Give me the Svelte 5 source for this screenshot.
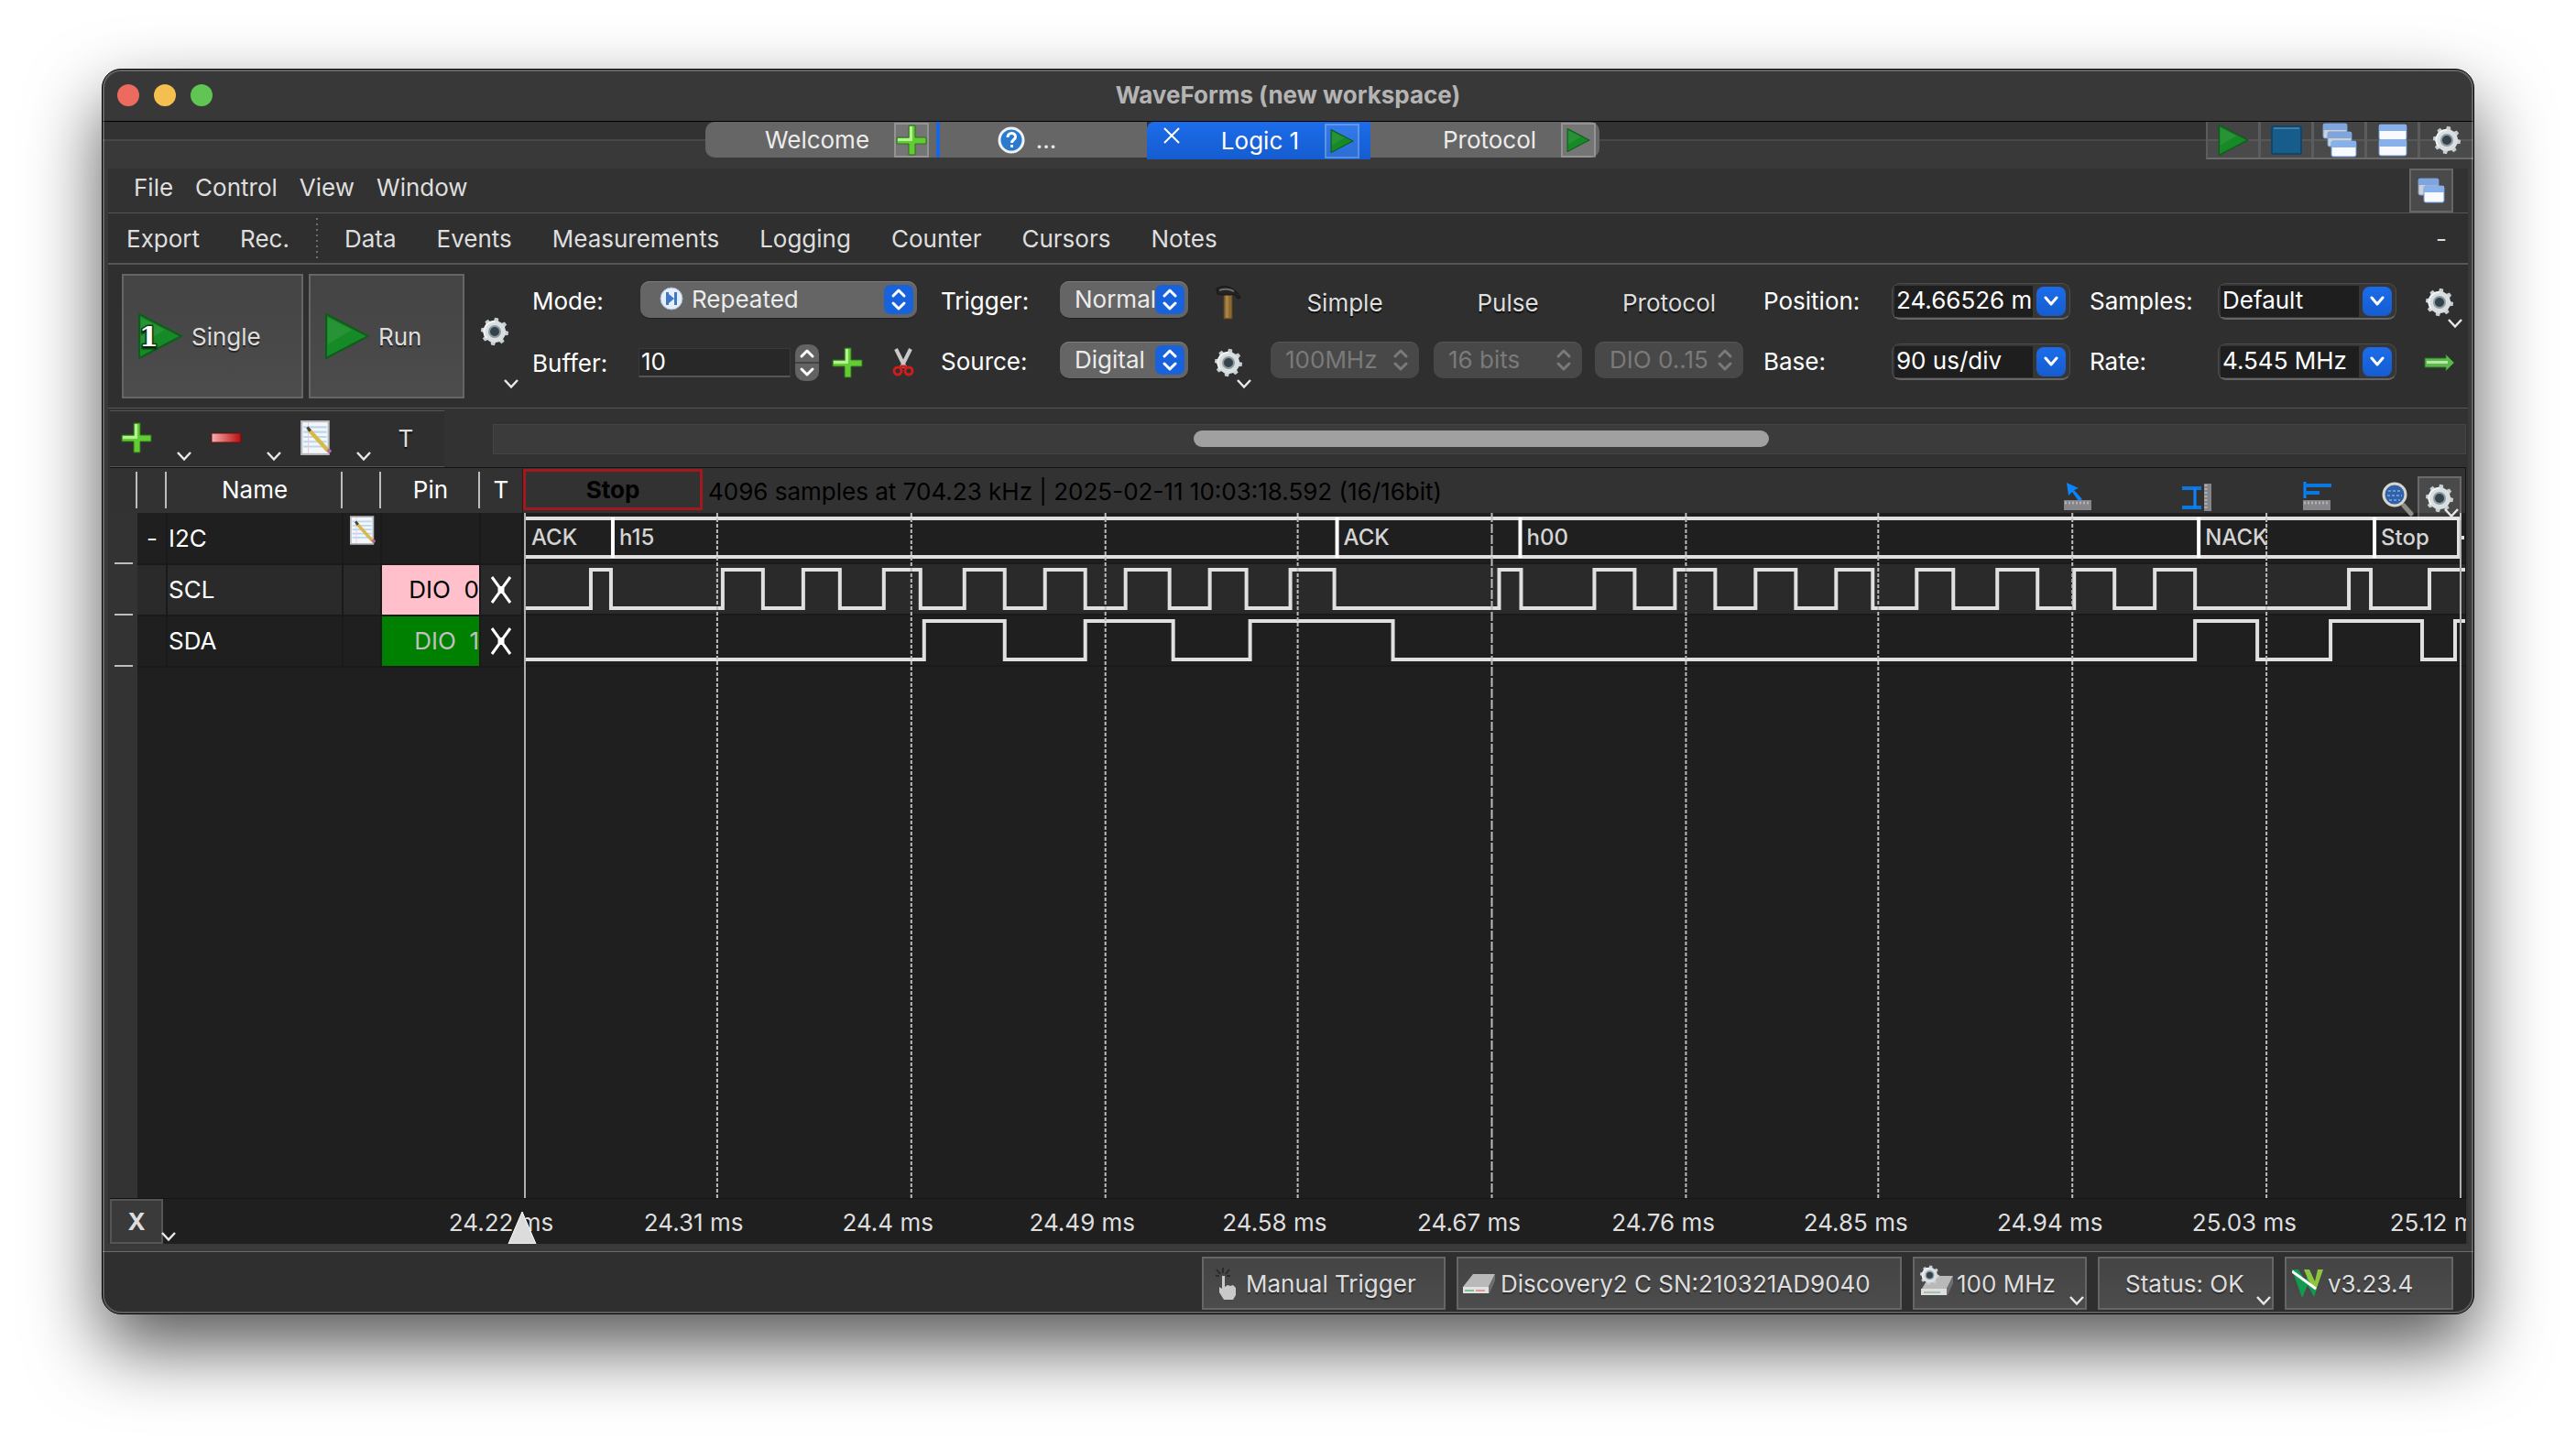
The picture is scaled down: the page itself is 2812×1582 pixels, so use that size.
<script>
  const menus = ['File', 'Control', 'View', 'Window'];
  const exportTools = ['Export', 'Rec.'];
  const viewTools = ['Data', 'Events', 'Measurements', 'Logging', 'Counter', 'Cursors', 'Notes'];

  const plotWidth = 2121;
  const plotHeight = 748;
  const gridLines = [2, 212, 424, 636, 846, 1058, 1270, 1480, 1692, 1904, 2116];
  const ticks = [
    '24.22 ms', '24.31 ms', '24.4 ms', '24.49 ms', '24.58 ms', '24.67 ms',
    '24.76 ms', '24.85 ms', '24.94 ms', '25.03 ms', '25.12 ms'
  ];
  const frames = [
    { at: 2, text: 'ACK' },
    { at: 98, text: 'h15' },
    { at: 889, text: 'ACK' },
    { at: 1089, text: 'h00' },
    { at: 1830, text: 'NACK' },
    { at: 2022, text: 'Stop' }
  ];
  const sclEdges = [
    74, 96, 218, 262, 306, 346, 394, 434, 482, 526, 570, 614, 658, 706, 750, 790, 838, 886,
    1066, 1090, 1170, 1214, 1258, 1302, 1346, 1390, 1434, 1474, 1522, 1562, 1610, 1654, 1694,
    1738, 1782, 1826, 1994, 2018, 2082
  ];
  const sdaEdges = [438, 526, 614, 710, 794, 950, 1826, 1894, 1974, 2074, 2110];

  function trace(edges, high, low) {
    let level = low;
    let d = `M2 ${low}`;
    for (const x of edges) {
      level = level === low ? high : low;
      d += `H${x}V${level}`;
    }
    return d + `H${plotWidth}`;
  }
  const pct = (x) => (x / plotWidth) * 100 + '%';
  const teeth = [0, 45, 90, 135, 180, 225, 270, 315];
</script>

{#snippet gearShape()}
  {#each teeth as a}
    <path d="M14 7 L15 2 H19 L20 7Z" transform="rotate({a + 8} 17 17)" fill="#c6ced2" />
  {/each}
  <circle cx="17" cy="17" r="9" fill="none" stroke="#d9dee1" stroke-width="6" />
  <path d="M8 24 A11 11 0 0 1 17 6" fill="none" stroke="#f2f4f5" stroke-width="2" />
  <circle cx="17" cy="17" r="6" fill="#33424b" stroke="#8c999f" stroke-width="2" />
{/snippet}

{#snippet gear()}
  <svg class="ico" width="34" height="34" viewBox="0 0 34 34" aria-hidden="true">{@render gearShape()}</svg>
{/snippet}

{#snippet play(size)}
  <svg class="ico" width={size} height={size} viewBox="0 0 50 50" aria-hidden="true">
    <path d="M2 1 L48 25 L2 49Z" fill="#168a26" stroke="#0e5c1b" stroke-width="2" />
    <path d="M4 5 L30 18 L4 34Z" fill="#3a9a45" opacity=".5" />
  </svg>
{/snippet}

{#snippet plus()}
  <svg class="ico" width="34" height="34" viewBox="0 0 34 34" aria-hidden="true">
    <path d="M14 1h7v13h12v7H21v12h-7V21H1v-7h13z" fill="#62cc35" stroke="#2f6f1a" stroke-width="1" />
    <path d="M15 2h3v13H15zM2 15h16v3H2z" fill="#b6f095" />
  </svg>
{/snippet}

{#snippet chevron()}
  <svg class="ico chev" width="18" height="12" viewBox="0 0 18 12" aria-hidden="true">
    <path d="M2 2 L9 9.500 L16 2" fill="none" stroke="#e8e8e8" stroke-width="2.500" />
  </svg>
{/snippet}

{#snippet updown()}
  <svg class="arrows" width="32" height="32" viewBox="0 0 32 32" aria-hidden="true">
    <rect class="pad" width="32" height="32" rx="7" />
    <path d="M10 12 L16 6 L22 12 M10 20 L16 26 L22 20" fill="none" stroke-width="3" stroke-linecap="round" stroke-linejoin="round" />
  </svg>
{/snippet}

{#snippet notepad(w, h)}
  <svg class="ico" width={w} height={h} viewBox="0 0 32 36" aria-hidden="true">
    <rect x="1" y="1" width="28" height="34" fill="#f4f7fa" stroke="#b5b9bd" stroke-width="2" />
    <path d="M3 7h24M3 12h24M3 17h24M3 22h24M3 27h24" stroke="#bcd6f0" stroke-width="2" />
    <path d="M8 2v32" stroke="#f0c8dc" stroke-width="1" />
    <path d="M8 9 L28 31" stroke="#d8b848" stroke-width="4" />
    <path d="M7 7 L10 11" stroke="#444" stroke-width="3" />
    <path d="M28 30 L31 33" stroke="#b06a9a" stroke-width="4" />
  </svg>
{/snippet}

{#snippet pane(x, y, w, h, faded)}
  <rect {x} {y} width={w} height={h} rx="2" fill={faded ? '#cdd1d6' : '#f8fafd'} stroke="#6f98d4" stroke-width="1" />
  <rect {x} {y} width={w} height="7" fill={faded ? '#7fa5dc' : '#86b1ea'} />
{/snippet}

{#snippet cross()}
  <svg width="28" height="32" viewBox="0 0 28 32" aria-hidden="true">
    <path d="M3 2 L11 13 V19 L3 30 M23 2 L15 13 V19 L23 30 M13 12 V20" fill="none" stroke="#fff" stroke-width="3" />
  </svg>
{/snippet}

{#snippet combo(id, value)}
  <div class="combo">
    <input {id} type="text" {value} />
    <button type="button" aria-label="Show choices">
      <svg width="16" height="12" viewBox="0 0 16 12" aria-hidden="true">
        <path d="M2 2 L8 9 L14 2" fill="none" stroke="#fff" stroke-width="3" stroke-linecap="round" stroke-linejoin="round" />
      </svg>
    </button>
  </div>
{/snippet}

<div class="page">
  <main class="window">
    <header class="titlebar">
      <div class="lights">
        <button type="button" class="light red" aria-label="Close"></button>
        <button type="button" class="light yellow" aria-label="Minimize"></button>
        <button type="button" class="light green" aria-label="Zoom"></button>
      </div>
      <h1>WaveForms (new workspace)</h1>
    </header>

    <div class="tabstrip">
      <div class="tabs">
        <div class="tab first">
          <button type="button" class="name">Welcome</button>
          <button type="button" class="mini" aria-label="Add">{@render plus()}</button>
        </div>
        <div class="tab help">
          <button type="button" class="name">
            <svg class="ico" width="30" height="30" viewBox="0 0 30 30" aria-hidden="true">
              <circle cx="15" cy="15" r="13" fill="#2a7bd0" stroke="#f0f2f4" stroke-width="3" />
              <path d="M11 12 C11 6 19.500 6 19.500 11.500 C19.500 14.500 15.500 14.500 15.500 18" fill="none" stroke="#fff" stroke-width="3" />
              <rect x="14" y="20" width="3" height="3" fill="#fff" />
            </svg>
            <span>...</span>
          </button>
        </div>
        <div class="tab active">
          <button type="button" class="shut" aria-label="Close tab">
            <svg width="20" height="20" viewBox="0 0 20 20" aria-hidden="true"><path d="M2 2 L18 18 M18 2 L2 18" stroke="#fff" stroke-width="2" /></svg>
          </button>
          <button type="button" class="name">Logic 1</button>
          <button type="button" class="mini" aria-label="Run Logic 1">{@render play(26)}</button>
        </div>
        <div class="tab last">
          <button type="button" class="name">Protocol</button>
          <button type="button" class="mini" aria-label="Run Protocol">{@render play(26)}</button>
        </div>
      </div>
      <div class="window-tools">
        <button type="button" aria-label="Run all">{@render play(34)}</button>
        <button type="button" aria-label="Stop all">
          <svg width="34" height="32" viewBox="0 0 34 32" aria-hidden="true"><rect x="1" y="1" width="32" height="30" rx="1" fill="#175d8c" stroke="#124567" stroke-width="2" /><path d="M3 3h28" stroke="#3a80ad" stroke-width="2" /></svg>
        </button>
        <button type="button" aria-label="Cascade windows">
          <svg width="38" height="38" viewBox="0 0 38 38" aria-hidden="true">{@render pane(1, 1, 26, 16, true)}{@render pane(6, 10, 26, 16, true)}{@render pane(10, 20, 27, 17, false)}</svg>
        </button>
        <button type="button" aria-label="Tile windows">
          <svg width="32" height="36" viewBox="0 0 32 36" aria-hidden="true">{@render pane(1, 1, 30, 17, false)}{@render pane(1, 18, 30, 17, false)}</svg>
        </button>
        <button type="button" aria-label="Settings">{@render gear()}</button>
      </div>
    </div>

    <div class="panel">
      <nav class="menubar">
        {#each menus as m}<button type="button">{m}</button>{/each}
        <button type="button" class="undock" aria-label="Undock">
          <svg width="30" height="28" viewBox="0 0 30 28" aria-hidden="true">{@render pane(1, 1, 22, 18, true)}{@render pane(7, 9, 22, 18, false)}</svg>
        </button>
      </nav>

      <nav class="toolbar">
        {#each exportTools as t}<button type="button">{t}</button>{/each}
        <span class="dots"></span>
        {#each viewTools as t}<button type="button">{t}</button>{/each}
        <button type="button" class="collapse">-</button>
      </nav>

      <section class="controls">
        <button type="button" class="big single">
          <svg width="50" height="52" viewBox="0 0 50 52" aria-hidden="true">
            <path d="M2 2 L48 26 L2 50Z" fill="#168a26" stroke="#0e5c1b" stroke-width="2" />
            <path d="M4 6 L30 19 L4 35Z" fill="#3a9a45" opacity=".5" />
            <text x="2" y="37" class="one">1</text>
          </svg>
          <span>Single</span>
        </button>
        <button type="button" class="big run">{@render play(50)}<span>Run</span></button>
        <button type="button" class="plain acquire" aria-label="Acquisition options">{@render gear()}{@render chevron()}</button>

        <div class="fields">
          <label for="mode">Mode:</label>
          <div class="select wide">
            <select id="mode"><option>Repeated</option></select>
            <svg class="lead" width="28" height="28" viewBox="0 0 28 28" aria-hidden="true">
              <circle cx="14" cy="14" r="12" fill="#e6eef9" stroke="#9fb2cc" stroke-width="1" />
              <path d="M8 7h3v14H8zM17 7h3v14h-3zM11 9l6 5-6 5z" fill="#3f78c4" />
            </svg>
            {@render updown()}
          </div>
          <label for="trigger">Trigger:</label>
          <div class="select"><select id="trigger"><option>Normal</option></select>{@render updown()}</div>
          <button type="button" class="plain" aria-label="Force trigger">
            <svg width="28" height="38" viewBox="0 0 28 38" aria-hidden="true">
              <rect x="9" y="9" width="9" height="28" fill="#8d6a35" stroke="#5a401b" stroke-width="1" />
              <rect x="11" y="10" width="3" height="26" fill="#a78345" />
              <path d="M1 4 C8 0 20 0 27 14 L24 15 C21 10 19 10 17 11 L8 11 L2 10Z" fill="#232323" stroke="#141414" stroke-width="1" />
              <path d="M4 6 C10 4 14 4 20 7" stroke="#6c6c6c" stroke-width="2" fill="none" />
            </svg>
          </button>
          <button type="button" class="caption">Simple</button>
          <button type="button" class="caption">Pulse</button>
          <button type="button" class="caption">Protocol</button>
          <label for="position">Position:</label>
          {@render combo('position', '24.66526 ms')}
          <label for="samples">Samples:</label>
          {@render combo('samples', 'Default')}
          <button type="button" class="plain drop" aria-label="Sampling options">{@render gear()}{@render chevron()}</button>

          <label for="buffer" class="low">Buffer:</label>
          <div class="buffer">
            <input id="buffer" type="text" value="10" />
            <svg class="spin" width="26" height="40" viewBox="0 0 26 40" aria-hidden="true">
              <rect width="26" height="40" rx="10" fill="#636363" />
              <path d="M0 20h26" stroke="#444" stroke-width="2" />
              <path d="M7 13 L13 7 L19 13 M7 27 L13 33 L19 27" fill="none" stroke="#fff" stroke-width="3" stroke-linecap="round" stroke-linejoin="round" />
            </svg>
            <button type="button" class="plain" aria-label="Add buffer">{@render plus()}</button>
            <button type="button" class="plain cut" aria-label="Clear buffers">
              <svg width="24" height="32" viewBox="0 0 24 32" aria-hidden="true">
                <path d="M4 1 L14 21 M20 1 L10 21" stroke="#c9c9c9" stroke-width="4" />
                <circle cx="6" cy="25" r="4" fill="none" stroke="#d01c1c" stroke-width="3" />
                <circle cx="18" cy="25" r="4" fill="none" stroke="#d01c1c" stroke-width="3" />
                <path d="M9 20h6" stroke="#d01c1c" stroke-width="3" />
              </svg>
            </button>
          </div>
          <label for="source">Source:</label>
          <div class="select"><select id="source"><option>Digital</option></select>{@render updown()}</div>
          <button type="button" class="plain drop" aria-label="Trigger options">{@render gear()}{@render chevron()}</button>
          <div class="select off"><select aria-label="Simple" disabled><option>100MHz</option></select>{@render updown()}</div>
          <div class="select off"><select aria-label="Pulse" disabled><option>16 bits</option></select>{@render updown()}</div>
          <div class="select off"><select aria-label="Protocol" disabled><option>DIO 0..15</option></select>{@render updown()}</div>
          <label for="base">Base:</label>
          {@render combo('base', '90 us/div')}
          <label for="rate">Rate:</label>
          {@render combo('rate', '4.545 MHz')}
          <button type="button" class="plain" aria-label="Apply rate">
            <svg width="34" height="20" viewBox="0 0 34 20" aria-hidden="true"><path d="M1 5H24V1L33 10L24 19V15H1Z" fill="#5cb84c" stroke="#2c6a22" stroke-width="1" /><path d="M3 8h23v3H3z" fill="#b5e6a4" /></svg>
          </button>
        </div>
      </section>

      <div class="channelbar">
        <div class="channel-tools">
          <button type="button" class="plain drop" aria-label="Add channel">{@render plus()}{@render chevron()}</button>
          <button type="button" class="plain drop" aria-label="Remove channel">
            <svg class="ico" width="34" height="34" viewBox="0 0 34 34" aria-hidden="true">
              <defs><linearGradient id="minus" x2="1" y2="0"><stop offset="0" stop-color="#f7b0b0" /><stop offset="1" stop-color="#b80d0d" /></linearGradient></defs>
              <rect x="1" y="12" width="32" height="10" fill="url(#minus)" stroke="#6d1010" stroke-width="1" />
            </svg>
            {@render chevron()}
          </button>
          <button type="button" class="plain drop" aria-label="Edit channel">{@render notepad(34, 38)}{@render chevron()}</button>
          <button type="button" class="plain tee">T</button>
        </div>
        <div class="track"><div class="thumb"></div></div>
      </div>

      <div class="scope">
        <table>
          <thead>
            <tr><th class="c0"></th><th class="c1"></th><th class="c2">Name</th><th class="c3"></th><th class="c4">Pin</th><th class="c5">T</th></tr>
          </thead>
          <tbody>
            <tr><td class="gutter"></td><td class="mid">-</td><td>I2C</td><td class="note">{@render notepad(28, 32)}</td><td></td><td></td></tr>
            <tr class="alt"><td class="gutter"></td><td></td><td>SCL</td><td></td><td class="pin pink">DIO  0</td><td class="mid">{@render cross()}</td></tr>
            <tr><td class="gutter"></td><td></td><td>SDA</td><td></td><td class="pin leaf">DIO  1</td><td class="mid">{@render cross()}</td></tr>
            <tr class="rest"><td class="gutter"></td><td colspan="5"></td></tr>
          </tbody>
        </table>

        <div class="plot">
          <div class="plot-head">
            <strong class="state">Stop</strong>
            <span class="info">4096 samples at 704.23 kHz | 2025-02-11 10:03:18.592 (16/16bit)</span>
            <div class="plot-tools">
              <button type="button" class="plain" aria-label="Cursor measure">
                <svg width="30" height="32" viewBox="0 0 30 32" aria-hidden="true"><path d="M3 1 L16 7 L11 9 L20 19 L16 21 L9 11 L5 15Z" fill="#0a84ff" /><rect y="20" width="30" height="11" fill="#85858a" /><path d="M1 23h28" stroke="#b0b0b4" stroke-width="3" stroke-dasharray="2 2" /></svg>
              </button>
              <button type="button" class="plain" aria-label="Vertical measure">
                <svg width="34" height="32" viewBox="0 0 34 32" aria-hidden="true"><path d="M1 7h21M1 28h21" stroke="#0a78e0" stroke-width="4" /><path d="M15 7v21" stroke="#0a84ff" stroke-width="3" /><rect x="25" y="2" width="8" height="30" fill="#85858a" /><path d="M27 3v28" stroke="#b0b0b4" stroke-width="3" stroke-dasharray="2 2" /></svg>
              </button>
              <button type="button" class="plain" aria-label="Horizontal measure">
                <svg width="32" height="32" viewBox="0 0 32 32" aria-hidden="true"><path d="M3 0v18" stroke="#0a84ff" stroke-width="3" /><path d="M3 4h29M3 12h16" stroke="#0a78e0" stroke-width="4" /><rect x="1" y="20" width="30" height="11" fill="#85858a" /><path d="M2 23h28" stroke="#b0b0b4" stroke-width="3" stroke-dasharray="2 2" /></svg>
              </button>
              <button type="button" class="plain" aria-label="Zoom">
                <svg width="36" height="38" viewBox="0 0 36 38" aria-hidden="true"><path d="M25 26 L33 35" stroke="#8e8e84" stroke-width="5" stroke-linecap="round" /><circle cx="15" cy="14" r="12" fill="#2f62a8" stroke="#d6d6cc" stroke-width="3" /><path d="M8 10h14M7 15h16M9 20h12" stroke="#6d97d2" stroke-width="2" stroke-dasharray="3 2" /></svg>
              </button>
              <button type="button" class="options" aria-label="Plot options">{@render gear()}{@render chevron()}</button>
            </div>
          </div>
          <div class="canvas">
            <svg class="wave" viewBox="0 0 {plotWidth} {plotHeight}" preserveAspectRatio="none" aria-label="Logic waveforms">
              <rect width={plotWidth} height={plotHeight} fill="#1f1f1f" />
              <rect y="56" width={plotWidth} height="54" fill="#2a2a2a" />
              <path d="M0 55H{plotWidth}M0 111H{plotWidth}M0 167H{plotWidth}" stroke="#1a1a1a" stroke-width="2" />
              <g fill="none" stroke="#e0e0e0" stroke-width="4">
                <path d="M2 6H2116M2 48H2116" />
                {#each frames.slice(1) as f}<path d="M{f.at} 5V49" stroke="#fff" />{/each}
                <path d="M2114 5V49M2114 27H2120" />
                <path d={trace(sclEdges, 62, 104)} />
                <path d={trace(sdaEdges, 118, 160)} />
              </g>
              {#each gridLines as x, i}
                <path
                  d="M{x} 0V{plotHeight}"
                  stroke={i === 0 || i === 10 ? '#b0b0b0' : '#bcbcbc'}
                  stroke-width="2"
                  stroke-dasharray={i === 0 || i === 10 ? 'none' : i === 5 ? '10 2' : '4 2'}
                />
              {/each}
            </svg>
            {#each frames as f}<span class="frame" style:left={pct(f.at + 7)}>{f.text}</span>{/each}
          </div>
        </div>
      </div>

      <div class="axis">
        <button type="button" class="axis-x">X</button>
        {@render chevron()}
        <div class="ticks">
          {#each ticks as t, i}<span style:left={pct(gridLines[i] - 25)}>{t}</span>{/each}
          <svg class="marker" width="32" height="36" viewBox="0 0 32 36" aria-hidden="true"><path d="M16 1 L31 36 H1Z" fill="#dcdcdc" stroke="#fff" stroke-width="1" /></svg>
        </div>
      </div>
    </div>

    <footer class="status">
      <button type="button" class="st manual">
        <svg width="26" height="38" viewBox="0 0 26 38" aria-hidden="true"><path d="M9 1v6M2 3l4 5M16 3l-4 5M1 10h4M13 10h4" stroke="#2b2b2b" stroke-width="2" /><path d="M8 10h3v12l3-2 3 1 3-1 3 3v8l-3 5H10l-5-8v-6l3 2z" fill="#c9c9c9" /></svg>
        <span>Manual Trigger</span>
      </button>
      <button type="button" class="st device">
        <svg width="38" height="24" viewBox="0 0 38 24" aria-hidden="true"><path d="M12 1H36L29 15H1Z" fill="#b9b9b9" /><path d="M1 15H29V22H1Z" fill="#e3e3e3" /><path d="M29 15L36 1V8L30 22H29Z" fill="#6f6f6f" /><path d="M3 19h10" stroke="#7ac290" stroke-width="2" /><path d="M15 19h10" stroke="#dc9c9c" stroke-width="2" /></svg>
        <span>Discovery2 C SN:210321AD9040</span>
      </button>
      <button type="button" class="st clock">
        <svg width="38" height="42" viewBox="0 0 38 42" aria-hidden="true"><path d="M10 12H36L29 26H2Z" fill="#b9b9b9" /><path d="M1 26H29V33H1Z" fill="#dedede" /><path d="M29 26L36 12V20L30 33H29Z" fill="#6f6f6f" /><path d="M4 30h18" stroke="#a4c2ac" stroke-width="2" /><g transform="scale(.7) translate(-2 -1)">{@render gearShape()}</g></svg>
        <span>100 MHz</span>{@render chevron()}
      </button>
      <button type="button" class="st state-ok"><span>Status: OK</span>{@render chevron()}</button>
      <button type="button" class="st version">
        <svg width="34" height="34" viewBox="0 0 34 34" aria-hidden="true"><path d="M0 1 H7 L14 13 L18 8 L27 22 L24 31 L17 18 L11 32Z" fill="#129a50" /><path d="M13 1 H19 L25 14 L28 1 H34 L26 24 L18 13Z" fill="#8cc63f" /><path d="M0 3 L26 22" stroke="#fff" stroke-width="3" /></svg>
        <span>v3.23.4</span>
      </button>
    </footer>
  </main>
</div>

<style>
  :global(body) {
    margin: 0;
    background: #fff;
  }
  .page {
    padding: 75px 111px 148px;
    overflow: hidden;
    font: 26px/32px Inter, 'Liberation Sans', sans-serif;
    color: #fff;
  }
  .page, .page :global(*) {
    box-sizing: border-box;
  }
  button, input, select {
    font: inherit;
    color: inherit;
    margin: 0;
    padding: 0;
    border: 0;
    background: none;
    white-space: nowrap;
  }
  button, .titlebar, .tab {
    display: flex;
    align-items: center;
  }
  svg {
    display: block;
    flex: none;
  }
  .window {
    position: relative;
    border: 1px solid #000;
    border-radius: 21px;
    background: #393939;
    overflow: hidden;
    box-shadow: 0 36px 80px rgba(0, 0, 0, 0.66);
  }
  .window::after {
    content: '';
    position: absolute;
    inset: 0;
    border: 2px solid rgba(255, 255, 255, 0.22);
    border-radius: 20px;
    pointer-events: none;
  }

  .titlebar {
    height: 57px;
    border-bottom: 1px solid #000;
    background: #383838;
    display: grid;
    grid-template-columns: 1fr auto 1fr;
  }
  .lights {
    display: flex;
    gap: 16px;
    padding-left: 16px;
  }
  .light {
    width: 24px;
    height: 24px;
    border-radius: 50%;
  }
  .red { background: #ed6a5e; }
  .yellow { background: #f5bf4f; }
  .green { background: #61c554; }
  h1 {
    margin: 0;
    font-size: 26px;
    line-height: 32px;
    font-weight: 700;
    color: #b4b4b4;
  }

  .tabstrip {
    height: 51px;
    display: flex;
    align-items: flex-start;
    background: linear-gradient(#323232 19px, #484848 19px, #484848 21px, #393939 21px);
  }
  .tabs {
    flex: 1;
    display: flex;
    justify-content: center;
    padding-right: 4px;
  }
  .tab {
    height: 39px;
    background: #666;
    color: #ececec;
    justify-content: flex-end;
  }
  .tab .name {
    height: 100%;
    flex: 1;
    justify-content: center;
  }
  .first {
    width: 252px;
    border-radius: 10px 0 0 10px;
    padding: 0 8px 0 38px;
  }
  .help {
    width: 230px;
    border-left: 4px solid #1a66e0;
    padding-right: 36px;
  }
  .help .name { gap: 12px; }
  .active {
    width: 244px;
    height: 41px;
    background: linear-gradient(#1c6cea, #155cd0);
    color: #fff;
    padding: 0 12px 0 17px;
    border-radius: 8px 0 0 0;
  }
  .active .name { padding-left: 16px; }
  .last {
    width: 250px;
    border-radius: 0 10px 10px 0;
    padding: 0 4px 0 52px;
  }
  .shut {
    height: 30px;
    align-self: flex-start;
  }
  .mini {
    width: 38px;
    height: 38px;
    justify-content: center;
    border: 2px solid rgba(255, 255, 255, 0.22);
    background: rgba(255, 255, 255, 0.1);
  }
  .window-tools {
    display: flex;
    height: 41px;
    border-left: 2px solid #5c5c5c;
    border-bottom: 2px solid #6a6a6a;
  }
  .window-tools button {
    width: 58px;
    justify-content: center;
    border-right: 3px solid #5c5c5c;
    background: rgba(255, 255, 255, 0.09);
  }
  .window-tools button:last-child { border-right: 0; }

  .panel {
    margin: 0 6px 8px;
    background: #323232;
  }
  .menubar {
    height: 49px;
    display: flex;
    align-items: center;
    gap: 24px;
    padding: 0 16px 0 28px;
    border-bottom: 1px solid #555;
    color: #dedede;
  }
  .menubar button { height: 48px; padding-bottom: 7px; }
  .menubar .undock {
    margin-left: auto;
    width: 48px;
    height: 48px;
    padding: 0;
    justify-content: center;
    border: 2px solid #666;
    background: #4a4a4a;
  }
  .toolbar {
    height: 56px;
    display: flex;
    align-items: center;
    gap: 44px;
    padding: 2px 23px 0 20px;
    border-bottom: 2px solid #555;
    background: #2f2f2f;
    color: #dedede;
    text-shadow: 0 2px 1px rgba(0, 0, 0, 0.7);
  }
  .dots {
    width: 2px;
    height: 46px;
    margin: 0 -15px;
    background: repeating-linear-gradient(#6e6e6e 0 2px, transparent 2px 6px);
  }
  .collapse { margin-left: auto; }

  .controls {
    height: 157px;
    display: flex;
    gap: 6px;
    padding: 10px 0 10px 15px;
    border-bottom: 1px solid #555;
    background: #2f2f2f;
  }
  .big {
    height: 136px;
    flex: none;
    padding: 0 0 0 15px;
    gap: 9px;
    border: 2px solid #666;
    background: linear-gradient(#444, #4c4c4c);
    color: #dedede;
    text-shadow: 0 2px 1px rgba(0, 0, 0, 0.5);
  }
  .big span { padding-top: 2px; }
  .single { width: 198px; }
  .run { width: 170px; }
  .one {
    font: bold 30px 'DejaVu Serif', serif;
    fill: #fff;
    stroke: #143a18;
    stroke-width: 3px;
    paint-order: stroke;
  }
  .plain {
    position: relative;
    justify-content: center;
  }
  .acquire {
    width: 54px;
    height: 126px;
    flex: none;
  }
  .chev {
    position: absolute;
    right: 0;
    bottom: 0;
  }
  .fields {
    display: grid;
    grid-template-columns: 118px 328px 130px 140px 90px 178px 176px 184px 140px 216px 140px 198px 72px;
    grid-template-rows: 42px 42px;
    row-gap: 24px;
    padding-top: 8px;
    margin-left: 8px;
  }
  .fields > label { padding-top: 6px; }
  .fields > .low { padding-top: 8px; }
  .fields > .plain {
    width: 52px;
    height: 46px;
    margin-left: 18px;
    justify-content: center;
  }
  .fields > .drop .chev { bottom: -6px; }
  .caption {
    width: 162px;
    height: 48px;
    justify-content: center;
    color: #dedede;
    text-shadow: 0 2px 1px rgba(0, 0, 0, 0.7);
  }
  .select {
    position: relative;
    width: 140px;
    height: 40px;
  }
  .wide { width: 302px; }
  .off { width: 162px; }
  select {
    appearance: none;
    width: 100%;
    height: 100%;
    padding: 0 34px 0 16px;
    border-radius: 10px;
    background: #656565;
    color: #ececec;
    box-shadow: inset 0 1px 0 #7c7c7c, 0 1px 1px #222;
    opacity: 1;
  }
  .wide select { padding-left: 56px; }
  .off select {
    background: #484848;
    color: #7a7a7a;
    box-shadow: inset 0 1px 0 #555;
  }
  .lead, .arrows {
    position: absolute;
    pointer-events: none;
  }
  .lead { left: 20px; top: 5px; }
  .arrows {
    right: 4px;
    top: 4px;
    stroke: #fff;
  }
  .pad { fill: #1862dc; stroke: none; }
  .off .arrows { stroke: #7a7a7a; }
  .off .pad { fill: none; }
  .combo {
    width: 195px;
    height: 40px;
    margin-top: 2px;
    display: flex;
    align-items: center;
    gap: 4px;
    padding: 0 4px 0 2px;
    border: 1px solid #4c4c4c;
    border-bottom: 2px solid #666;
    border-radius: 9px;
    background: #363636;
  }
  .combo input {
    flex: 1;
    min-width: 0;
    height: 34px;
    padding: 0 0 3px 2px;
    background: #1e1e1e;
  }
  .combo button {
    width: 32px;
    height: 32px;
    justify-content: center;
    border-radius: 8px;
    background: linear-gradient(#1c6cea, #155cd0);
  }
  .buffer {
    display: flex;
    align-items: center;
    height: 40px;
    margin-top: 3px;
  }
  .buffer input {
    width: 166px;
    height: 32px;
    margin-left: -2px;
    padding: 0 2px 1px;
    background: #282828;
    border: 1px solid #3a3a3a;
    border-bottom: 2px solid #555;
  }
  .spin { margin: 0 14px 0 5px; }
  .cut { margin-left: 32px; }

  .channelbar {
    height: 64px;
    display: flex;
    align-items: center;
    gap: 53px;
    padding: 0 2px;
  }
  .channel-tools {
    width: 365px;
    height: 62px;
    margin-top: 2px;
    display: flex;
    border-top: 1px solid #555;
    border-bottom: 1px solid #555;
    background: #2f2f2f;
    padding-left: 12px;
  }
  .channel-tools .drop {
    width: 78px;
    height: 58px;
    margin-right: 20px;
    justify-content: flex-start;
  }
  .channel-tools .chev { bottom: 3px; }
  .tee {
    width: 40px;
    color: #dedede;
    margin-left: -3px;
    text-shadow: 0 2px 1px rgba(0, 0, 0, 0.7);
  }
  .track {
    flex: 1;
    display: flex;
    align-items: center;
    height: 33px;
    margin-top: 2px;
    background: #3b3b3b;
    border: 1px solid #444;
  }
  .thumb {
    width: 29.2%;
    height: 18px;
    margin-left: 35.5%;
    border-radius: 9px;
    background: #a0a0a0;
  }

  .scope {
    display: flex;
    margin: 0 2px;
    border: 1px solid #141414;
    border-left-width: 0;
  }
  table {
    width: 450px;
    flex: none;
    table-layout: fixed;
    border-collapse: collapse;
    background: #1f1f1f;
  }
  th, td { padding: 0; font-weight: 400; overflow: hidden; white-space: pre; }
  th {
    height: 49px;
    background: linear-gradient(#bdbdbd, #bdbdbd) right 4px / 2px 40px no-repeat #323232;
    padding-bottom: 1px;
  }
  .c0 { width: 30px; }
  .c1 { width: 32px; }
  .c2 { width: 192px; }
  .c3 { width: 42px; }
  .c4 { width: 108px; }
  .c5 { width: 46px; background: #323232; }
  td {
    height: 56px;
    padding-left: 1px;
    border-right: 2px solid #1a1a1a;
    border-bottom: 2px solid #1a1a1a;
  }
  .alt td { background-color: #2a2a2a; }
  td.gutter {
    border: 0;
    background: linear-gradient(#bdbdbd, #bdbdbd) 5px 100% / 20px 2px no-repeat #333;
  }
  .mid { text-align: center; }
  .mid svg { margin: 0 auto; }
  .note { vertical-align: top; padding: 3px 0 0 7px; }
  .pin { text-align: right; }
  .alt .pink { background: #ffc0cb; color: #000; }
  .leaf { background: #008000; color: #c0c0c0; }
  tr.rest td { height: 580px; border: 0; }
  tr.rest td.gutter { background: #333; }

  .plot {
    flex: 1;
    min-width: 0;
    display: flex;
    flex-direction: column;
  }
  .plot-head {
    height: 49px;
    display: flex;
    align-items: flex-start;
    padding: 1px 4px 0 0;
    color: #000;
  }
  .state {
    width: 196px;
    height: 45px;
    flex: none;
    border: 3px solid #a3171f;
    text-align: center;
    line-height: 40px;
  }
  .info { padding: 9px 0 0 6px; white-space: nowrap; }
  .plot-tools {
    margin-left: auto;
    display: flex;
    position: relative;
    z-index: 1;
  }
  .plot-tools .plain { margin-top: 14px; align-items: flex-start; }
  .plot-tools .plain:nth-child(1) { margin-right: 98px; }
  .plot-tools .plain:nth-child(2) { margin-right: 98px; }
  .plot-tools .plain:nth-child(3) { margin-right: 54px; }
  .plot-tools .plain:nth-child(4) { margin-right: 4px; }
  .options {
    position: relative;
    width: 48px;
    height: 48px;
    margin-top: 8px;
    justify-content: center;
    border: 2px solid rgba(255, 255, 255, 0.18);
    background: rgba(255, 255, 255, 0.12);
  }
  .canvas {
    position: relative;
    flex: 1;
    min-height: 748px;
    overflow: hidden;
  }
  .wave {
    position: absolute;
    inset: 0;
    width: 100%;
    height: 100%;
  }
  .frame {
    position: absolute;
    top: 11px;
    font-size: 24px;
    font-weight: 500;
    color: #d4d4d4;
  }

  .axis {
    position: relative;
    display: flex;
    height: 49px;
    margin: 0 2px;
    background: #1f1f1f;
    overflow: hidden;
    color: #dedede;
  }
  .axis-x {
    width: 58px;
    justify-content: center;
    border: 2px solid #555;
    background: #3a3a3a;
    font-weight: 700;
  }
  .axis .chev { position: static; align-self: flex-end; margin: 0 0 2px -3px; }
  .ticks {
    position: relative;
    flex: 1;
    margin-left: 377px;
  }
  .ticks span {
    position: absolute;
    top: 10px;
    transform: translateX(-50%);
    white-space: nowrap;
  }
  .marker {
    position: absolute;
    left: -16px;
    bottom: 0;
  }

  .status {
    height: 68px;
    display: flex;
    justify-content: flex-end;
    gap: 12px;
    padding: 5px 22px 0 0;
    border-top: 1px solid #6b6b6b;
    background: #2f2f2f;
    color: #dedede;
  }
  .st {
    position: relative;
    height: 58px;
    gap: 5px;
    padding: 2px 0 0 6px;
    border: 2px solid #666;
    background: linear-gradient(#444, #4c4c4c);
    text-shadow: 0 2px 1px rgba(0, 0, 0, 0.4);
  }
  .st .chev { right: 0; bottom: 2px; }
  .manual { width: 266px; padding-left: 12px; gap: 8px; }
  .device { width: 486px; padding-left: 4px; gap: 4px; }
  .clock { width: 190px; gap: 2px; }
  .state-ok { width: 192px; padding-left: 28px; }
  .version { width: 184px; }
</style>
